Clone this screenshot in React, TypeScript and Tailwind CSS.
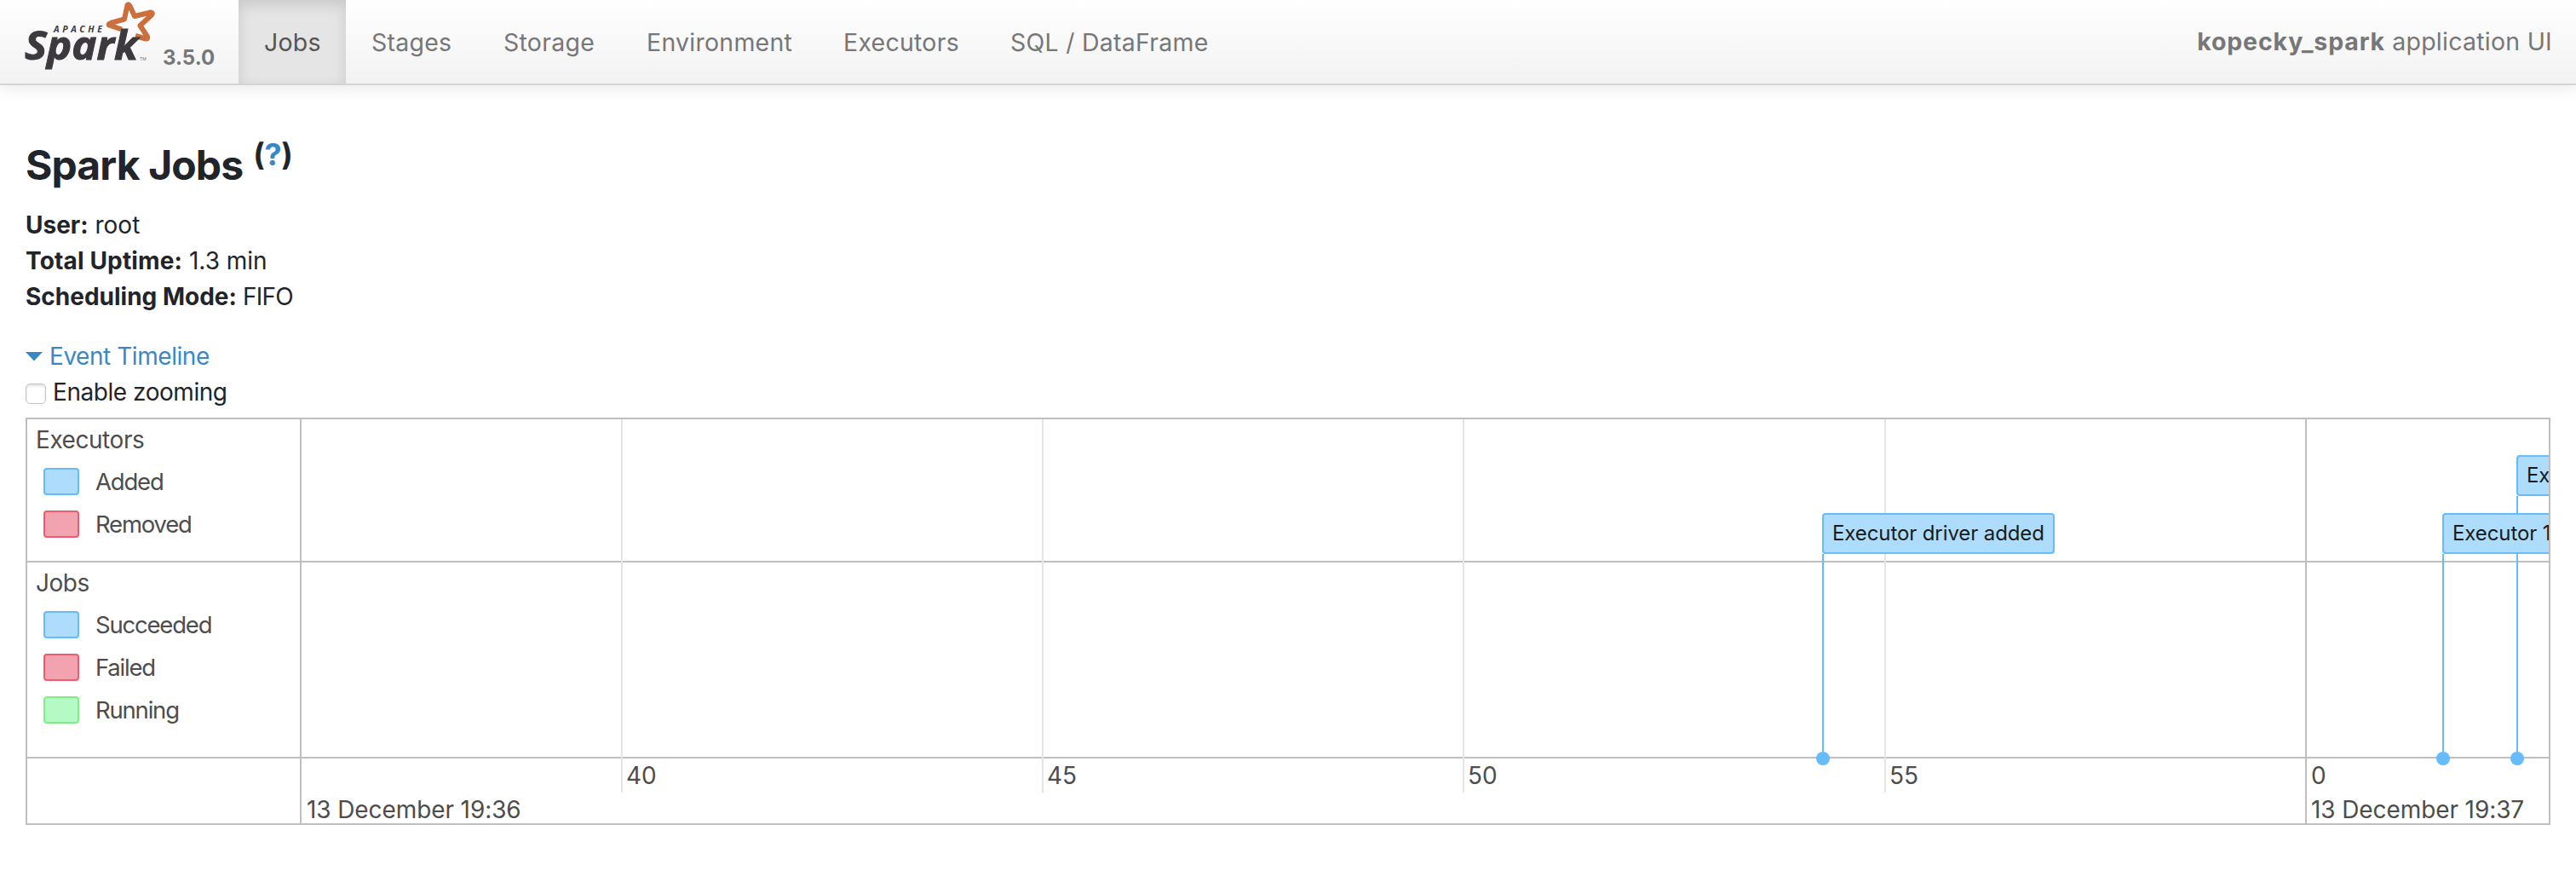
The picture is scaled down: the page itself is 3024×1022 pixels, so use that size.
import React from 'react';

type Swatch = { label: string; box: string };

const blue = 'bg-[#addcfd] border-[#66bbfa]';
const red = 'bg-[#f3a3b0] border-[#ed5c70]';
const green = 'bg-[#b5f9c4] border-[#7eef85]';

const tabs = [
  { label: 'Jobs', cls: 'w-[126px] bg-[#e5e5e5] text-[#555555] shadow-[inset_0_6px_16px_rgba(0,0,0,0.125)]' },
  { label: 'Stages', cls: 'w-[155px] text-[#777777]' },
  { label: 'Storage', cls: 'w-[168px] text-[#777777]' },
  { label: 'Environment', cls: 'w-[231px] text-[#777777]' },
  { label: 'Executors', cls: 'w-[196px] text-[#777777]' },
  { label: 'SQL / DataFrame', cls: 'w-[300px] text-[#777777]' },
];

const ticks = [
  { label: '40', x: 'left-[375px]' },
  { label: '45', x: 'left-[869px]' },
  { label: '50', x: 'left-[1363px]' },
  { label: '55', x: 'left-[1858px]' },
];

function Logo() {
  return (
    <svg className="h-[84px] w-[154px] shrink-0" viewBox="28 0 154 84" aria-label="Apache Spark">
      <path
        d="M143 34.500 L128 29.500 Q127 28 130 27 L146 22.500 L149.500 6 Q151 4 152.500 7 L158 19 L177 14.500 Q180 15 178 17.500 L164.500 30 L173 43 Q174 46 171 45.500 L159 42"
        fill="none" stroke="#cb6f3c" strokeWidth="6" strokeLinejoin="round"
      />
      <text x="63" y="37.500" fontFamily="Open Sans" fontStyle="italic" fontWeight="700" fontSize="10.500" fill="#3c3a3e" textLength="57">APACHE</text>
      <text x="29" y="70" fontFamily="Open Sans" fontStyle="italic" fontWeight="700" fontSize="47" fill="#3c3a3e" stroke="#3c3a3e" strokeWidth="1" textLength="133" lengthAdjust="spacingAndGlyphs">Spark</text>
      <text x="164" y="71" fontFamily="Inter" fontSize="5" fill="#777777">TM</text>
    </svg>
  );
}

function Legend({ title, items, cls }: { title: string; items: Swatch[]; cls: string }) {
  return (
    <div className={`flex w-full flex-col border-b-2 border-[#bfbfbf] pl-[10px] pt-[4px] ${cls}`}>
      <div className="h-[42px] leading-[41px] tracking-[-0.45px]">{title}</div>
      <div className="flex flex-col pl-[9px] pt-[2px]">
        {items.map((i) => (
          <div key={i.label} className="flex h-[50px] items-center gap-[19px]">
            <span className={`h-[32px] w-[42px] rounded-[4px] border-2 ${i.box}`} />
            <span className="-mt-[1px] text-[27.500px] tracking-[-1.200px]">{i.label}</span>
          </div>
        ))}
      </div>
    </div>
  );
}

function EventBox({ text, cls }: { text: string; cls: string }) {
  return (
    <div className={`absolute z-10 h-[48px] whitespace-nowrap rounded-[4px] border-2 border-[#66bbfa] bg-[#addcfd] pl-[10px] text-[24px] leading-[44px] tracking-[-0.100px] text-[#1a1a1a] ${cls}`}>
      {text}
    </div>
  );
}

function Pin({ stem, dot }: { stem: string; dot: string }) {
  return (
    <>
      <div className={`absolute w-[2px] bg-[#66bbfa] ${stem}`} />
      <div className={`absolute top-[390px] size-[16px] rounded-full bg-[#66bbfa] ${dot}`} />
    </>
  );
}

export default function App() {
  return (
    <div className="h-[1022px] w-[3024px] overflow-hidden bg-white font-['Inter',sans-serif] text-[28px] leading-[42px] text-[#212529]">
      <header className="flex h-[100px] border-b-2 border-[#d4d4d4] bg-linear-to-b from-white to-[#f2f2f2] shadow-[0_2px_20px_rgba(0,0,0,0.1)]">
        <div className="flex w-[280px] pl-[28px]">
          <Logo />
          <span className="pl-[9px] pt-[47px] text-[24px] font-bold text-[#777777]">3.5.0</span>
        </div>
        <nav className="flex text-[28.500px] tracking-[0.250px]">
          {tabs.map((t) => (
            <a key={t.label} className={`h-[98px] whitespace-nowrap pl-[30px] leading-[99px] ${t.cls}`}>{t.label}</a>
          ))}
        </nav>
        <div className="ml-auto pr-[28px] text-[28.500px] leading-[98px] tracking-[0.250px] text-[#777777]">
          <strong className="tracking-[0.850px]">kopecky_spark</strong> application UI
        </div>
      </header>

      <main className="flex flex-col px-[30px]">
        <h3 className="flex h-[142px] pt-[65px] text-[48px] font-bold leading-[58px] tracking-[-0.900px]">
          Spark Jobs
          <sup className="top-0 -mt-[13px] pl-[12px] text-[36px] leading-[58px] tracking-[-0.300px]">(<a className="text-[#3a87c8]">?</a>)</sup>
        </h3>
        <ul className="pt-[1px]">
          <li><strong>User:</strong> root</li>
          <li><strong className="tracking-[0.150px]">Total Uptime:</strong> 1.3 min</li>
          <li><strong>Scheduling Mode:</strong><span className="tracking-[-0.800px]"> FIFO</span></li>
        </ul>
        <div className="mt-[28px] flex h-[42px] items-center gap-[8px] text-[#3a87c8]">
          <svg className="h-[11px] w-[20px]" viewBox="0 0 20 11"><path d="M0 0H20L10 10.500Z" fill="#3a87c8" /></svg>
          <span className="tracking-[-0.450px]">Event Timeline</span>
        </div>
        <label className="flex h-[42px] items-center gap-[8px]">
          <span className="mt-[3px] size-[24px] rounded-[5px] border-[1.500px] border-[#c4c4c4] bg-white shadow-[inset_0_2px_3px_rgba(0,0,0,0.12)]" />
          <span className="tracking-[-0.450px]">Enable zooming</span>
        </label>

        <section className="mt-[9px] flex h-[478px] w-[2964px] border-2 border-[#bfbfbf] text-[#4d4d4d]">
          <div className="flex w-[322px] flex-col border-r-2 border-[#bfbfbf]">
            <Legend title="Executors" cls="h-[168px]" items={[{ label: 'Added', box: blue }, { label: 'Removed', box: red }]} />
            <Legend title="Jobs" cls="h-[230px]" items={[{ label: 'Succeeded', box: blue }, { label: 'Failed', box: red }, { label: 'Running', box: green }]} />
          </div>
          <div className="relative flex flex-1 flex-col overflow-hidden tracking-[-0.100px]">
            <div className="h-[168px] border-b-2 border-[#bfbfbf]" />
            <div className="h-[230px] border-b-2 border-[#bfbfbf]" />
            {ticks.map((t) => (
              <div key={t.label} className={`absolute top-0 h-[438px] border-l-2 border-[#e5e5e5] pl-[4px] pt-[398px] leading-[40px] ${t.x}`}>{t.label}</div>
            ))}
            <div className="absolute left-[2352px] top-0 h-[474px] border-l-2 border-[#bfbfbf] pl-[5px] pt-[398px] leading-[40px]">
              0<br />13 December 19:37
            </div>
            <div className="absolute left-[6px] top-[438px] leading-[40px]">13 December 19:36</div>
            <Pin stem="left-[1785px] top-[158px] h-[236px]" dot="left-[1778px]" />
            <Pin stem="left-[2513px] top-[158px] h-[236px]" dot="left-[2506px]" />
            <Pin stem="left-[2600px] top-[90px] h-[304px]" dot="left-[2593px]" />
            <EventBox text="Executor driver added" cls="left-[1785px] top-[110px] w-[273px]" />
            <EventBox text="Executor 1 added" cls="left-[2513px] top-[110px] w-[240px]" />
            <EventBox text="Executor 0 added" cls="left-[2600px] top-[42px] w-[240px]" />
          </div>
        </section>
      </main>
    </div>
  );
}
